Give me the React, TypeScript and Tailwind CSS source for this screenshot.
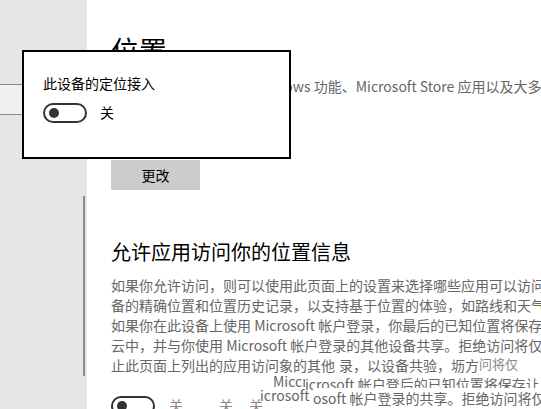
import React from "react";

const font = { fontFamily: '"Noto Sans CJK SC", "Noto Sans", sans-serif' };

function Toggle() {
  return (
    <div className="relative h-[20px] w-[44px] shrink-0 rounded-full border-2 border-[#333333] bg-white">
      <div className="absolute left-[4px] top-[3px] h-[10px] w-[10px] rounded-full bg-[#333333]" />
    </div>
  );
}

export default function App() {
  const lines = [
    "如果你允许访问，则可以使用此页面上的设置来选择哪些应用可以访问你设",
    "备的精确位置和位置历史记录，以支持基于位置的体验，如路线和天气。",
    "如果你在此设备上使用 Microsoft 帐户登录，你最后的已知位置将保存在",
    "云中，并与你使用 Microsoft 帐户登录的其他设备共享。拒绝访问将仅阻",
    "止此页面上列出的应用访问象的其他",
  ];
  return (
    <div
      className="relative flex h-[409px] w-[541px] overflow-hidden bg-white"
      style={font}
    >
      {/* sidebar */}
      <div className="relative flex w-[87px] shrink-0 flex-col bg-[#e6e6e6]">
        <div className="mt-[84px] h-[31px] shrink-0 border-y border-[#8c8c8c] bg-[#f0f0f0]" />
        <div className="ml-[83px] mt-[81px] h-[180px] w-[2px] shrink-0 bg-[#8a8a8a]" />
      </div>

      {/* main */}
      <div className="relative flex min-w-0 flex-1 flex-col pl-[24px]">
        <div className="mt-[32px] h-[36px] shrink-0 whitespace-nowrap text-[28px] leading-[36px] text-black">
          位置
        </div>
        <div className="mt-[8px] shrink-0 whitespace-nowrap text-[14px] leading-[20px] text-[#666666]">
          开启此设备的定位后，Windows 功能、Microsoft Store 应用以及大多数桌面应用可以使用你的位置
        </div>
        <button className="mt-[64px] flex h-[30px] w-[89px] shrink-0 items-center justify-center bg-[#cccccc] text-[14px] text-black">
          更改
        </button>
        <div className="mt-[48px] shrink-0 whitespace-nowrap text-[20px] leading-[28px] text-black">
          允许应用访问你的位置信息
        </div>
        <div className="mt-[9px] flex shrink-0 flex-col text-[14px] leading-[20px] text-[#666666]">
          {lines.map((l, i) => (
            <div key={i} className="whitespace-nowrap">
              {l}
            </div>
          ))}
        </div>
        <div className="mt-[20px] flex shrink-0 items-center gap-[14px] text-[14px] text-[#888888]">
          <Toggle />
          <span>关</span>
          <span className="ml-[22px]">关</span>
          <span className="ml-[2px]">关</span>
        </div>

        {/* glitched overlapping text */}
        <span className="absolute left-[252px] top-[355px] whitespace-nowrap bg-white text-[14px] leading-[20px] text-[#666666]">
          录，以设备共验，坜方
          <span className="relative -top-[2px] text-[13px] text-[#888888]">问将仅</span>
        </span>
        <span className="absolute left-[186px] top-[371px] whitespace-nowrap text-[14px] leading-[20px] text-[#666666]">
          Miccrosc
        </span>
        <span className="absolute left-[218px] top-[374px] whitespace-nowrap bg-white text-[14px] leading-[20px] text-[#666666]">
          icrosoft 帐户登后的已知位置将保存让
        </span>
        <span className="absolute left-[173px] top-[385px] whitespace-nowrap text-[14px] leading-[20px] text-[#666666]">
          icrosoft
        </span>
        <span className="absolute left-[226px] top-[388px] whitespace-nowrap bg-white text-[14px] leading-[20px] text-[#666666]">
          osoft 帐户登录的共享。拒绝访问将仅阻
        </span>
      </div>

      {/* popup */}
      <div className="absolute left-[22px] top-[50px] flex h-[109px] w-[269px] flex-col border-2 border-black bg-white pl-[19px] pt-[21px]">
        <div className="text-[14px] leading-[20px] text-black">此设备的定位接入</div>
        <div className="mt-[9px] flex items-center gap-[13px]">
          <Toggle />
          <span className="text-[14px] text-black">关</span>
        </div>
      </div>
    </div>
  );
}
